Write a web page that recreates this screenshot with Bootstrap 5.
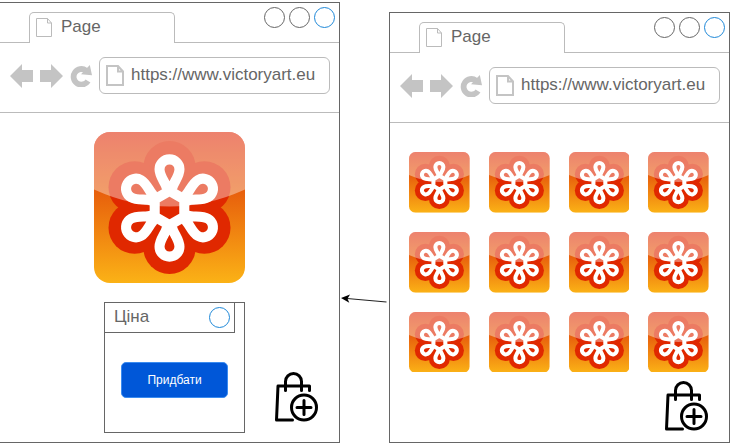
<!DOCTYPE html>
<html lang="uk">
<head>
<meta charset="utf-8">
<meta name="viewport" content="width=device-width, initial-scale=1">
<title>Victory Art</title>
<link href="https://cdn.jsdelivr.net/npm/bootstrap@5.3.0/dist/css/bootstrap.min.css" rel="stylesheet">
<style>
  body { font-family: "Liberation Sans", Arial, sans-serif; font-size: 17px; line-height: 20px; color: #666; background: #fff; }
  svg { display: block; flex-shrink: 0; }
  .window { flex: 1 1 0; min-width: 0; border: 1px solid #666; }
  .window-first { border-left: 0; margin-top: 2px; }
  .window-second { margin: 12px 1px 0 0; }
  .tab-lead { width: 29px; }
  .tab-lead, .tab-rest { border-bottom: 1px solid #bbb; }
  .tab-page { width: 146px; height: 31px; margin-top: 9px; padding: 0 0 2px 6px; border: 1px solid #bbb; border-bottom: 0; border-radius: 5px 5px 0 0; background: #fff; color: #666; gap: 9px; }
  .round-btn { width: 21px; height: 21px; padding: 0; border: 1px solid #666; border-radius: 50%; background: #fff; }
  .round-blue { border-color: #1e88d8; }
  .window-controls { gap: 4px; padding: 4px 4px 0 0; height: 39px; }
  .toolbar { padding: 14px 9px 18px 10px; border-bottom: 1px solid #bbb; gap: 7px; }
  .tool-btn { padding: 0; border: 0; background: none; }
  .address { height: 37px; padding: 0 6px; border: 1px solid #bbb; border-radius: 6px; min-width: 0; gap: 7px; }
  .address input { border: 0; padding: 0 0 2px; min-width: 0; width: 100%; color: #666; outline: 0; background: none; line-height: 20px; }
  .page-first { padding-top: 19px; }
  .art-large { width: 151px; }
  .buy-row { gap: 30px; padding: 19px 21px 9px 0; }
  .dialog-box { width: 141px; height: 131px; border: 1px solid #666; }
  .dialog-head { height: 29px; margin-right: 9px; padding: 0 4px 0 9px; border-right: 1px solid #666; border-bottom: 1px solid #666; box-sizing: content-box; }
  .dialog-title { padding-bottom: 2px; }
  .dialog-body { padding-bottom: 5px; }
  .btn-buy { width: 107px; height: 36px; padding: 0; border-radius: 5px; font-size: 12px; color: #fff; background: #0057d8; border: 1px solid #3b8cf0; }
  .btn-buy:hover { background: #004bbd; color: #fff; }
  .bag-first { margin-bottom: 11px; }
  .gallery { display: grid; grid-template-columns: repeat(4, 1fr); gap: 19px; padding: 29px 20px 0 19px; }
  .gallery svg { width: 100%; }
  .bag-second { padding: 9px 21px 9px 0; }
  .link-arrow { width: 49px; padding-top: 292px; }
</style>
<script src="https://cdn.jsdelivr.net/npm/bootstrap@5.3.0/dist/js/bootstrap.bundle.min.js"></script>
</head>
<body>
<svg width="0" height="0" class="position-absolute" aria-hidden="true">
  <defs>
    <linearGradient id="base" x1="0" y1="0" x2="0" y2="1">
      <stop offset="0" stop-color="#e23312"/>
      <stop offset=".4" stop-color="#e8600c"/>
      <stop offset="1" stop-color="#fbb216"/>
    </linearGradient>
    <path id="petal" d="M-2.500-19C-3.500-25-9.900-31-9.900-38.500A9.900 9.800 0 0 1 9.900-38.500C9.900-31 3.500-25 2.500-19"/>
    <symbol id="flower" viewBox="0 0 150 150">
      <rect width="150" height="150" rx="16" fill="url(#base)"/>
      <g fill="#e02800" transform="translate(75 75)">
        <circle r="40"/>
        <circle cy="-40" r="26"/><circle cy="40" r="26"/>
        <circle cx="34.6" cy="-20" r="26"/><circle cx="34.6" cy="20" r="26"/>
        <circle cx="-34.6" cy="-20" r="26"/><circle cx="-34.6" cy="20" r="26"/>
      </g>
      <path fill="#fff" fill-opacity=".39" d="M0 57V16A16 16 0 0 1 16 0H134A16 16 0 0 1 150 16V57Q75 91 0 57Z"/>
      <g transform="translate(75 75.500)" fill="none" stroke="#fff" stroke-width="10">
        <path stroke-linejoin="bevel" d="M0-17 14.700-8.500V8.500L0 17-14.700 8.500V-8.500Z"/>
        <use href="#petal"/>
        <use href="#petal" transform="rotate(60)"/>
        <use href="#petal" transform="rotate(120)"/>
        <use href="#petal" transform="rotate(180)"/>
        <use href="#petal" transform="rotate(240)"/>
        <use href="#petal" transform="rotate(300)"/>
      </g>
    </symbol>
    <symbol id="sheet" viewBox="0 0 16 19">
      <path d="M.5.500H11.500L15.500 5V18.500H.5ZM11.500.500V5H15.500" fill="#fff" stroke="#bbb"/>
    </symbol>
    <symbol id="sheet-bold" viewBox="0 0 18 21">
      <path d="M1 1H12L17 6.500V20H1ZM12 1V6.500H17" fill="#fff" stroke="#c4c4c4" stroke-width="2"/>
    </symbol>
    <symbol id="back" viewBox="0 0 23 24">
      <path d="M0 12 12 0V6H23V18H12V24Z" fill="#c4c4c4"/>
    </symbol>
    <symbol id="reload" viewBox="0 0 22 22">
      <path d="M18 16A7.800 7.800 0 1 1 16 5.500" fill="none" stroke="#c4c4c4" stroke-width="5.800"/>
      <path d="M19.800 0 22 10.300 11 9.200Z" fill="#c4c4c4"/>
    </symbol>
    <symbol id="bag" viewBox="0 0 43 50">
      <g fill="none" stroke="#000" stroke-width="3" stroke-linecap="round" stroke-linejoin="round">
        <path d="M17.500 48H1.500L3 14H34.500V18.500M10.500 18.500V9.500A8 8 0 0 1 26.500 9.500V18.500"/>
        <circle cx="29" cy="35.500" r="12.500"/>
        <path d="M29 28.500V42.500M22 35.500H36"/>
      </g>
    </symbol>
  </defs>
</svg>

<main class="d-flex min-vh-100">
  <section class="window window-first d-flex flex-column">
    <div class="d-flex">
      <div class="tab-lead"></div>
      <button type="button" class="tab-page d-flex align-items-center"><svg width="16" height="19"><use href="#sheet"/></svg>Page</button>
      <div class="tab-rest flex-fill">
        <div class="window-controls d-flex justify-content-end">
          <button type="button" class="round-btn" aria-label="Minimize"></button>
          <button type="button" class="round-btn" aria-label="Maximize"></button>
          <button type="button" class="round-btn round-blue" aria-label="Close"></button>
        </div>
      </div>
    </div>
    <div class="toolbar d-flex align-items-center">
      <button type="button" class="tool-btn" aria-label="Back"><svg width="23" height="24"><use href="#back"/></svg></button>
      <button type="button" class="tool-btn" aria-label="Forward"><svg width="23" height="24" viewBox="0 0 23 24"><use href="#back" width="23" height="24" transform="translate(23 0) scale(-1 1)"/></svg></button>
      <button type="button" class="tool-btn" aria-label="Reload"><svg width="22" height="22"><use href="#reload"/></svg></button>
      <label class="address d-flex align-items-center flex-fill"><svg width="18" height="21"><use href="#sheet-bold"/></svg><input type="text" value="https://www.victoryart.eu" aria-label="Address"></label>
    </div>
    <div class="page-first d-flex flex-column flex-fill">
      <svg class="art-large mx-auto" viewBox="0 0 150 150"><use href="#flower"/></svg>
      <div class="buy-row d-flex justify-content-end align-items-end">
        <div class="dialog-box d-flex flex-column">
          <div class="dialog-head d-flex align-items-center justify-content-between">
            <span class="dialog-title">Ціна</span>
            <button type="button" class="round-btn round-blue" aria-label="Close"></button>
          </div>
          <div class="dialog-body d-flex flex-fill align-items-center justify-content-center">
            <button type="button" class="btn btn-buy">Придбати</button>
          </div>
        </div>
        <button type="button" class="tool-btn bag-first" aria-label="Add to bag"><svg width="43" height="50"><use href="#bag"/></svg></button>
      </div>
    </div>
  </section>

  <div class="link-arrow flex-shrink-0">
    <svg width="49" height="16" viewBox="0 0 49 16"><path d="M7 6.500 46.500 10" stroke="#222" stroke-width="1.200"/><path d="M1 6 10 2.500 7.500 6.700 9.300 10.800Z" fill="#000"/></svg>
  </div>

  <section class="window window-second d-flex flex-column">
    <div class="d-flex">
      <div class="tab-lead"></div>
      <button type="button" class="tab-page d-flex align-items-center"><svg width="16" height="19"><use href="#sheet"/></svg>Page</button>
      <div class="tab-rest flex-fill">
        <div class="window-controls d-flex justify-content-end">
          <button type="button" class="round-btn" aria-label="Minimize"></button>
          <button type="button" class="round-btn" aria-label="Maximize"></button>
          <button type="button" class="round-btn round-blue" aria-label="Close"></button>
        </div>
      </div>
    </div>
    <div class="toolbar d-flex align-items-center">
      <button type="button" class="tool-btn" aria-label="Back"><svg width="23" height="24"><use href="#back"/></svg></button>
      <button type="button" class="tool-btn" aria-label="Forward"><svg width="23" height="24" viewBox="0 0 23 24"><use href="#back" width="23" height="24" transform="translate(23 0) scale(-1 1)"/></svg></button>
      <button type="button" class="tool-btn" aria-label="Reload"><svg width="22" height="22"><use href="#reload"/></svg></button>
      <label class="address d-flex align-items-center flex-fill"><svg width="18" height="21"><use href="#sheet-bold"/></svg><input type="text" value="https://www.victoryart.eu" aria-label="Address"></label>
    </div>
    <div class="gallery">
      <svg viewBox="0 0 150 150"><use href="#flower"/></svg>
      <svg viewBox="0 0 150 150"><use href="#flower"/></svg>
      <svg viewBox="0 0 150 150"><use href="#flower"/></svg>
      <svg viewBox="0 0 150 150"><use href="#flower"/></svg>
      <svg viewBox="0 0 150 150"><use href="#flower"/></svg>
      <svg viewBox="0 0 150 150"><use href="#flower"/></svg>
      <svg viewBox="0 0 150 150"><use href="#flower"/></svg>
      <svg viewBox="0 0 150 150"><use href="#flower"/></svg>
      <svg viewBox="0 0 150 150"><use href="#flower"/></svg>
      <svg viewBox="0 0 150 150"><use href="#flower"/></svg>
      <svg viewBox="0 0 150 150"><use href="#flower"/></svg>
      <svg viewBox="0 0 150 150"><use href="#flower"/></svg>
    </div>
    <div class="bag-second d-flex justify-content-end">
      <button type="button" class="tool-btn" aria-label="Add to bag"><svg width="43" height="50"><use href="#bag"/></svg></button>
    </div>
  </section>
</main>
</body>
</html>
